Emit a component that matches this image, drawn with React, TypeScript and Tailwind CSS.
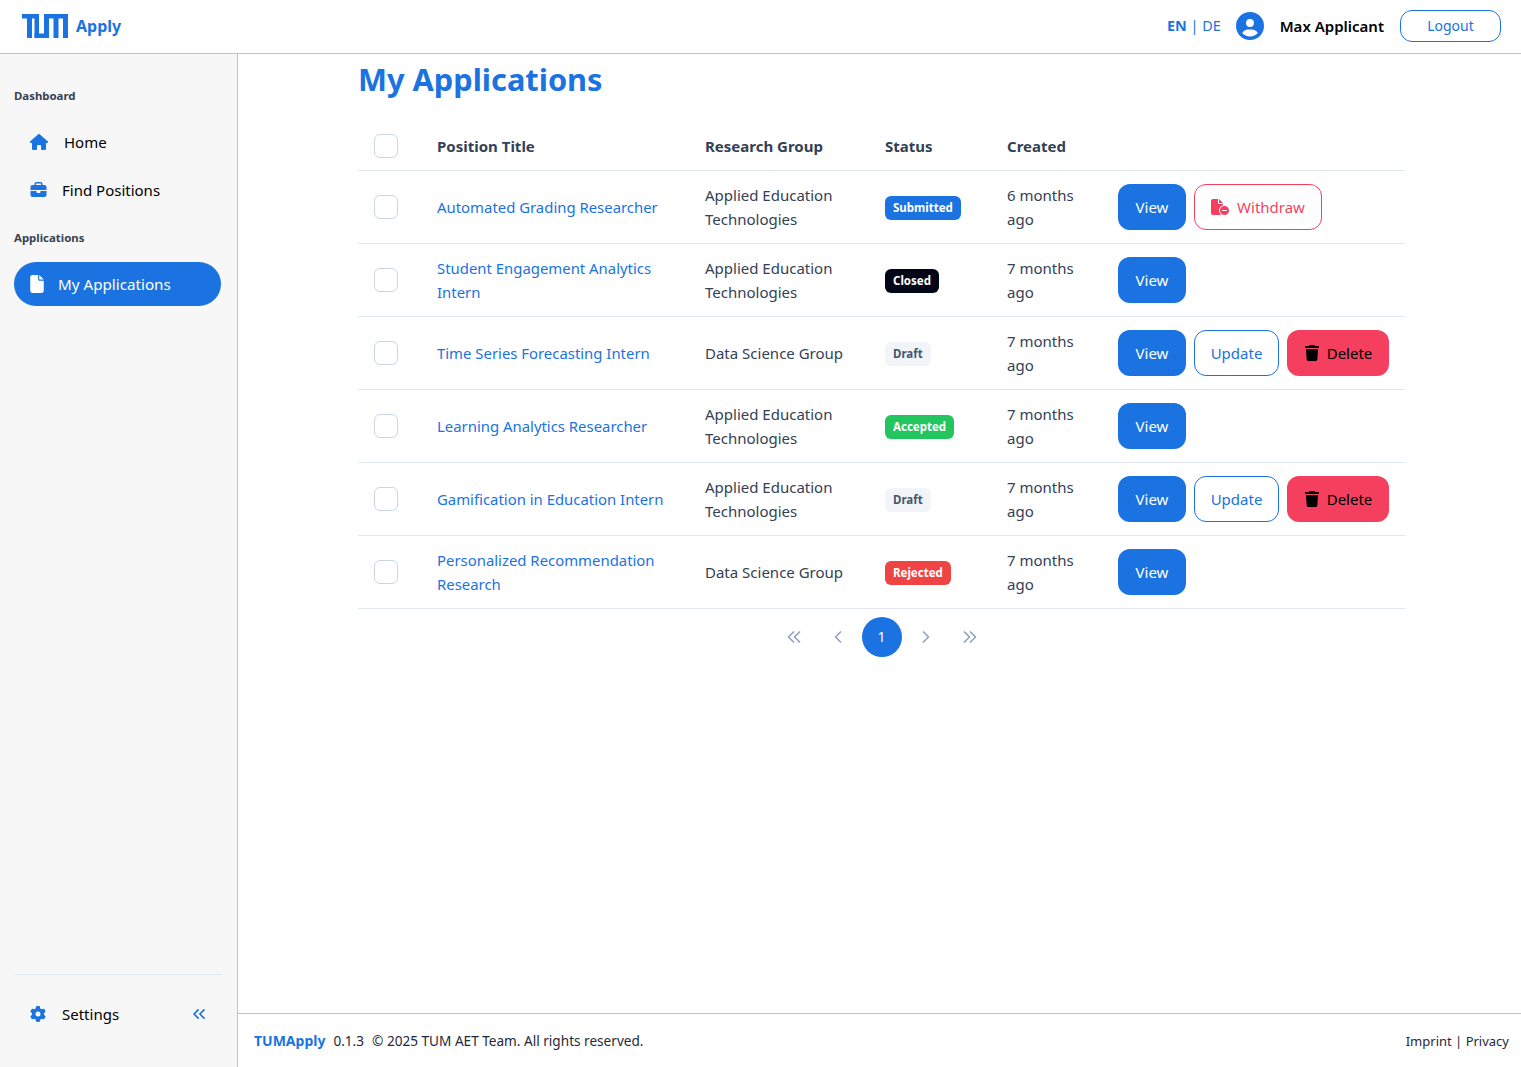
import { FaHouse, FaBriefcase, FaFile, FaGear, FaCircleUser, FaTrash, FaFileCircleMinus } from 'react-icons/fa6'
import { ChevronLeft, ChevronRight, ChevronsLeft } from 'lucide-react'

type Status = 'Submitted' | 'Closed' | 'Draft' | 'Accepted' | 'Rejected'

interface Row {
  title: string
  group: string
  status: Status
  created: string
}

const rows: Row[] = [
  { title: 'Automated Grading Researcher', group: 'Applied Education Technologies', status: 'Submitted', created: '6 months ago' },
  { title: 'Student Engagement Analytics Intern', group: 'Applied Education Technologies', status: 'Closed', created: '7 months ago' },
  { title: 'Time Series Forecasting Intern', group: 'Data Science Group', status: 'Draft', created: '7 months ago' },
  { title: 'Learning Analytics Researcher', group: 'Applied Education Technologies', status: 'Accepted', created: '7 months ago' },
  { title: 'Gamification in Education Intern', group: 'Applied Education Technologies', status: 'Draft', created: '7 months ago' },
  { title: 'Personalized Recommendation Research', group: 'Data Science Group', status: 'Rejected', created: '7 months ago' },
]

const badgeClass: Record<Status, string> = {
  Submitted: 'bg-[#1a73e0] text-white',
  Closed: 'bg-[#020617] text-white',
  Draft: 'bg-[#f1f5f9] text-[#475569]',
  Accepted: 'bg-[#22c55e] text-white',
  Rejected: 'bg-[#ef4444] text-white',
}

function Checkbox() {
  return <div className="h-6 w-6 rounded-md border border-[#cbd5e1] bg-white" />
}

function ViewButton() {
  return <button className="h-[46px] w-[68px] rounded-xl bg-[#1a73e0] text-white">View</button>
}

function Actions({ status }: { status: Status }) {
  return (
    <div className="flex gap-2">
      <ViewButton />
      {status === 'Submitted' && (
        <button className="flex h-[46px] w-[128px] items-center justify-center gap-2 rounded-xl border border-[#f43f5e] bg-white text-[#f43f5e]">
          <FaFileCircleMinus className="h-[18px] w-[18px]" />
          Withdraw
        </button>
      )}
      {status === 'Draft' && (
        <>
          <button className="h-[46px] w-[85px] rounded-xl border border-[#1a73e0] bg-white text-[#1a73e0]">Update</button>
          <button className="flex h-[46px] w-[102px] items-center justify-center gap-[7px] rounded-xl bg-[#f43f5e] text-black">
            <FaTrash className="h-4 w-4" />
            Delete
          </button>
        </>
      )}
    </div>
  )
}

function TumLogo() {
  return (
    <svg viewBox="0 0 46 24" className="h-6 w-[46px]" fill="#1a73e0">
      <path d="M0 0h17v24h-4.5V4.5H10V24H5V4.5H0z" />
      <path d="M12.5 19.5H27V24H12.5z" />
      <path d="M22 0h24v24h-5V4.5h-4.5V24h-5V4.5H27V24h-5z" />
    </svg>
  )
}

// pagination double chevrons are wider than lucide's, so they are drawn by hand
function DoubleChevron({ right = false }: { right?: boolean }) {
  return (
    <svg viewBox="0 0 14 12" className="h-3 w-3.5" fill="none" stroke="#94a3b8" strokeWidth="1.7" strokeLinecap="round" strokeLinejoin="round">
      <path d={right ? 'M1.5 1l5 5-5 5M7.5 1l5 5-5 5' : 'M6.5 1l-5 5 5 5M12.5 1l-5 5 5 5'} />
    </svg>
  )
}

function PageSlot({ children }: { children: React.ReactNode }) {
  return <div className="flex h-10 w-11 items-center justify-center">{children}</div>
}

function NavItem({ icon, label }: { icon: React.ReactNode; label: string }) {
  return (
    <div className="flex h-12 items-center pl-4 text-black">
      <span className="text-[#1a73e0]">{icon}</span>
      {label}
    </div>
  )
}

export default function App() {
  return (
    <div className="flex min-h-screen flex-col bg-white font-['Noto_Sans',sans-serif] text-[15px] text-[#334155]">
      <header className="flex h-[54px] items-center justify-between border-b border-[#c4c4c4] pb-px pl-[22px] pr-5">
        <div className="flex items-center gap-2">
          <TumLogo />
          <span className="text-base font-bold text-[#1a73e0]">Apply</span>
        </div>
        <div className="flex items-center">
          <span className="text-[14.4px] text-[#1a73e0]"><b>EN</b> | DE</span>
          <FaCircleUser className="ml-[15px] h-7 w-7 text-[#1a73e0]" />
          <span className="ml-4 font-semibold text-black">Max Applicant</span>
          <button className="ml-4 h-8 w-[101px] rounded-xl border border-[#1a73e0] text-sm text-[#1a73e0]">Logout</button>
        </div>
      </header>

      <div className="flex flex-1">
        <aside className="flex w-[238px] flex-col border-r border-[#c4c4c4] bg-[#f7f7f7] pl-[14px] pr-4">
          <div className="mt-[34px] text-[11.4px] leading-4 font-bold text-[#374151]">Dashboard</div>
          <div className="mt-[14px]">
            <NavItem icon={<FaHouse className="mr-4 h-4 w-[18px]" />} label="Home" />
            <NavItem icon={<FaBriefcase className="mr-[15px] h-4 w-[17px]" />} label="Find Positions" />
          </div>
          <div className="mt-4 text-[11.4px] leading-4 font-bold text-[#374151]">Applications</div>
          <div className="mt-4 flex h-11 items-center gap-[14px] rounded-full bg-[#1a73e0] pl-4 text-[15.2px] text-white">
            <FaFile className="h-[18px] w-3.5" />
            My Applications
          </div>
          <div className="mb-3 mt-auto border-t border-[#e2e8f0]">
            <div className="flex h-[80px] items-center pb-0.5 pl-4 pr-3 text-black">
              <FaGear className="h-4 w-4 text-[#1a73e0]" />
              <span className="ml-4 flex-1">Settings</span>
              <ChevronsLeft className="h-5 w-5 text-[#1a73e0]" />
            </div>
          </div>
        </aside>

        <div className="flex flex-1 flex-col">
          <main className="flex-1 pl-[120px] pr-[116px] pt-1">
            <h1 className="text-[30.75px] leading-[42px] font-bold text-[#1a73e0]">My Applications</h1>
            <table className="mt-[21px] w-[1047px] table-fixed border-collapse text-left">
              <colgroup>
                <col className="w-[79px]" />
                <col className="w-[268px]" />
                <col className="w-[180px]" />
                <col className="w-[122px]" />
                <col className="w-[111px]" />
                <col />
              </colgroup>
              <thead>
                <tr className="h-[49px] border-b border-[#e2e8f0]">
                  <th className="pl-4 pt-[2px] font-normal"><Checkbox /></th>
                  <th className="pt-[2px] font-bold">Position Title</th>
                  <th className="pt-[2px] font-bold">Research Group</th>
                  <th className="pt-[2px] font-bold">Status</th>
                  <th className="pt-[2px] font-bold">Created</th>
                  <th />
                </tr>
              </thead>
              <tbody>
                {rows.map((row) => (
                  <tr key={row.title} className="h-[73px] border-b border-[#e2e8f0] leading-6">
                    <td className="pl-4"><Checkbox /></td>
                    <td className="pr-3 text-[14.9px] text-[#1a73e0]">{row.title}</td>
                    <td className="pr-3">{row.group}</td>
                    <td>
                      <span className={`inline-block rounded-md px-2 text-[11.5px] leading-6 font-bold ${badgeClass[row.status]}`}>{row.status}</span>
                    </td>
                    <td className="pr-6">{row.created}</td>
                    <td><Actions status={row.status} /></td>
                  </tr>
                ))}
              </tbody>
            </table>
            <div className="mt-2 flex items-center justify-center text-[#94a3b8]">
              <PageSlot><DoubleChevron /></PageSlot>
              <PageSlot><ChevronLeft className="h-5 w-5" /></PageSlot>
              <div className="mx-0.5 flex h-10 w-10 items-center justify-center rounded-full bg-[#1a73e0] text-sm text-white">1</div>
              <PageSlot><ChevronRight className="h-5 w-5" /></PageSlot>
              <PageSlot><DoubleChevron right /></PageSlot>
            </div>
          </main>
          <footer className="flex h-[54px] items-center justify-between border-t border-[#c4c4c4] pl-4 pr-3 pt-[2px] text-[13.6px] text-[#1f2937]">
            <div className="flex gap-2">
              <b className="text-sm text-[#1a73e0]">TUMApply</b>
              <span>0.1.3</span>
              <span>© 2025 TUM AET Team. All rights reserved.</span>
            </div>
            <span className="text-[13px]">Imprint | Privacy</span>
          </footer>
        </div>
      </div>
    </div>
  )
}
